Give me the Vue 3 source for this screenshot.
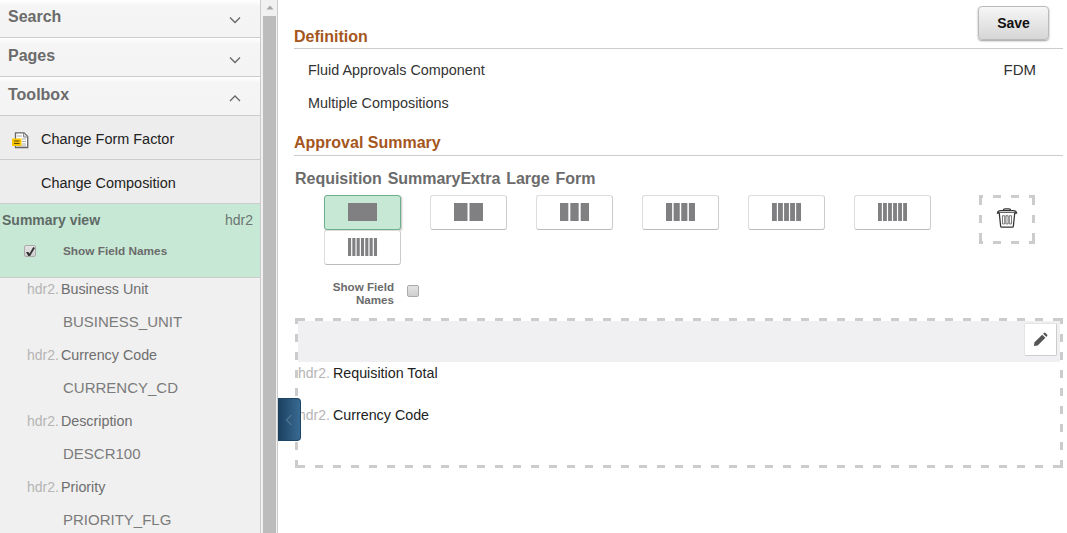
<script setup>
const heads = [
  { name: 'Search', up: false },
  { name: 'Pages', up: false },
  { name: 'Toolbox', up: true },
]
const fields = [
  ['Business Unit', 'BUSINESS_UNIT'],
  ['Currency Code', 'CURRENCY_CD'],
  ['Description', 'DESCR100'],
  ['Priority', 'PRIORITY_FLG'],
]
const layouts = [1, 2, 3, 4, 5, 6, 7]
function bars(n) {
  const gap = n > 4 ? 1.2 : n > 3 ? 1.500 : 2
  const w = (29 - gap * (n - 1)) / n
  return Array.from({ length: n }, (_, i) => ({ x: i * (w + gap), w }))
}
</script>

<template>
  <div class="page">
    <aside class="side">
      <div v-for="h in heads" :key="h.name" class="acc" :class="{ up: h.up }">
        <span>{{ h.name }}</span>
        <svg class="chev" width="14" height="8" viewBox="0 0 14 8">
          <path :d="h.up ? 'M2 7 L7 2 L12 7' : 'M2 1.500 L7 6.500 L12 1.500'" fill="none" stroke="#666" stroke-width="1.300" />
        </svg>
      </div>
      <div class="tool">
        <svg class="doc" width="17" height="17" viewBox="0 0 17 17">
          <path d="M3.500 .8 H12 L15.700 4.500 V15.500 H3.500 Z" fill="#fff" stroke="#666" stroke-width="1.300" />
          <path d="M11.500 1 V5 H15.500" fill="#ddd" stroke="#888" />
          <path d="M5 4 H10 M10 7 H14 M10 9.500 H14 M10 12 H14 M5 14 H14" stroke="#aaa" />
          <rect x="0" y="6.500" width="9.500" height="7.500" fill="#f7c600" />
          <path d="M2 9 H7.500 M2 11.500 H7.500" stroke="#5a4700" />
        </svg>
        <span>Change Form Factor</span>
      </div>
      <div class="tool"><span>Change Composition</span></div>
      <div class="summary">
        <div class="sum-top"><b>Summary view</b><span>hdr2</span></div>
        <label class="sum-check">
          <input class="cb" type="checkbox" checked />
          <span>Show Field Names</span>
        </label>
      </div>
      <div class="fields">
        <template v-for="f in fields" :key="f[1]">
          <div class="f-label"><i>hdr2.</i><span>{{ f[0] }}</span></div>
          <div class="f-code">{{ f[1] }}</div>
        </template>
      </div>
    </aside>

    <div class="scroll">
      <svg width="14" height="16" viewBox="0 0 14 16" class="arrow"><path d="M3.500 9.500 L7 5.500 L10.500 9.500 Z" fill="#a6a6a6" /></svg>
      <div class="thumb"></div>
    </div>

    <main class="main">
      <div class="sec first">
        <h2>Definition</h2>
        <button class="save">Save</button>
      </div>
      <div class="def-row"><span>Fluid Approvals Component</span><span class="fdm">FDM</span></div>
      <div class="def-row second"><span>Multiple Compositions</span></div>

      <div class="sec"><h2>Approval Summary</h2></div>
      <h3>Requisition SummaryExtra Large Form</h3>

      <div class="picker">
        <div class="grid">
          <button v-for="n in layouts" :key="n" class="lay" :class="{ on: n === 1 }">
            <svg width="29" height="18" viewBox="0 0 29 18">
              <rect v-for="(b, i) in bars(n)" :key="i" :x="b.x" y="0" :width="b.w" height="18" fill="#808083" />
            </svg>
          </button>
        </div>
        <div class="trash">
          <svg width="22" height="20" viewBox="0 0 24 22">
            <path d="M8 2.500 Q8 1 10 1 H14 Q16 1 16 2.500" fill="none" stroke="#333" stroke-width="1.400" />
            <path d="M1.500 5.500 Q2 3 5 3 H19 Q22 3 22.500 5.500 Z" fill="#fff" stroke="#333" stroke-width="1.400" />
            <path d="M3.500 5.500 L5 20 Q5 21 6.500 21 H17.500 Q19 21 19 20 L20.500 5.500" fill="#fff" stroke="#333" stroke-width="1.400" />
            <path d="M7 8.500 H9.500 V17.500 H7 Z M10.800 8.500 H13.200 V17.500 H10.800 Z M14.500 8.500 H17 V17.500 H14.500 Z" fill="none" stroke="#666" />
          </svg>
        </div>
      </div>

      <div class="show">
        <span>Show Field<br />Names</span>
        <input class="cb" type="checkbox" />
      </div>

      <div class="canvas">
        <div class="band">
          <button class="pencil">
            <svg width="15" height="15" viewBox="0 0 16 16">
              <path d="M1 15 L1.600 11 L9.800 2.800 L13.200 6.200 L5 14.400 Z M10.800 1.800 L12 .8 Q12.500 .4 13 .8 L15.200 3 Q15.600 3.500 15.200 4 L14.200 5.200 Z" fill="#555" />
            </svg>
          </button>
        </div>
        <div class="c-row"><i>hdr2.</i><span>Requisition Total</span></div>
        <div class="c-row"><i>hdr2.</i><span>Currency Code</span></div>
      </div>

      <div class="handle">
        <svg width="8" height="12" viewBox="0 0 8 12"><path d="M6.500 1 L1.500 6 L6.500 11" fill="none" stroke="#4d7491" stroke-width="1.200" /></svg>
      </div>
    </main>
  </div>
</template>

<style>
html, body { margin: 0; overflow: hidden; background: #fff; }
</style>

<style scoped>
.page {
  display: flex;
  width: 1067px;
  height: 533px;
  overflow: hidden;
  font-family: "Liberation Sans", Arial, sans-serif;
  background: #fff;
}
.side {
  width: 260px;
  flex: none;
  background: #f0f0f0;
  border-right: 1px solid #ccc;
  overflow: hidden;
}
.acc {
  height: 39px;
  box-sizing: border-box;
  border-bottom: 1px solid #ccc;
  background: linear-gradient(#fff 0, #f5f5f5 6px, #f4f4f4 100%);
  display: flex;
  justify-content: space-between;
  padding: 7px 18px 0 8px;
  font-size: 16px;
  font-weight: 700;
  line-height: 22px;
  color: #6b6b6b;
}
.acc:first-child { height: 38px; padding-top: 6px; }
.chev { margin-top: 11px; }
.acc:first-child .chev { margin-top: 10px; }
.acc.up .chev { margin-top: 10px; }
.tool {
  height: 44px;
  box-sizing: border-box;
  border-bottom: 1px solid #ccc;
  background: #ededed;
  display: flex;
  align-items: center;
  padding: 2px 0 0 41px;
  position: relative;
  font-size: 14.450px;
  color: #222;
}
.doc { position: absolute; left: 12px; top: 16px; }
.summary {
  height: 74px;
  box-sizing: border-box;
  background: #c8e8d6;
  border-bottom: 1px solid #ccc;
  padding: 6px 7px 0 2px;
}
.sum-top {
  display: flex;
  justify-content: space-between;
  font-size: 14px;
  line-height: 20px;
  color: #5f6b66;
}
.sum-top span { color: #6b7771; }
.sum-check {
  display: flex;
  align-items: center;
  margin-top: 11px;
  font-size: 11.800px;
  line-height: 20px;
  font-weight: 700;
  color: #6b6b6b;
}
.sum-check .cb { margin: 0 27px 0 22px; }
.cb {
  appearance: none;
  -webkit-appearance: none;
  position: relative;
  width: 12px;
  height: 12px;
  box-sizing: border-box;
  flex: none;
  border: 1px solid #aaa;
  border-radius: 2px;
  background: linear-gradient(#e4e4e4, #cfcfcf);
}
.cb:checked::after {
  content: "";
  position: absolute;
  left: 1px;
  top: 1px;
  width: 9px;
  height: 9px;
  background: #333;
  clip-path: polygon(0 55%, 25% 55%, 40% 72%, 80% 0, 100% 10%, 45% 100%, 25% 100%);
}
.fields { padding-top: 1px; }
.f-label, .f-code {
  height: 33px;
  line-height: 21px;
  font-size: 14.300px;
  color: #6e6e6e;
}
.f-label { padding-left: 27px; display: flex; }
.f-label i { font-style: normal; color: #b5b5b5; margin-right: 2px; font-size: 14px; }
.f-code { padding-left: 63px; line-height: 20px; font-size: 15px; color: #7b7b7b; }
.scroll {
  width: 15px;
  flex: none;
  background: #f1f1f1;
  border-right: 1px solid #ccc;
  display: flex;
  flex-direction: column;
  align-items: center;
  padding-left: 1px;
}
.arrow { flex: none; }
.thumb { width: 13px; flex: 1; background: #bcbcbc; }
.main {
  flex: 1;
  position: relative;
  padding: 0 4px 0 16px;
  min-width: 0;
}
.sec {
  display: flex;
  justify-content: space-between;
  align-items: flex-end;
  border-bottom: 1px solid #ccc;
  padding-bottom: 3px;
  margin-top: 20px;
  height: 20px;
}
.sec.first {
  margin-top: 0;
  padding: 0;
  height: 48px;
  align-items: flex-start;
}
.sec.first h2 { margin-top: 28px; }
h2 {
  margin: 0;
  font-size: 16px;
  line-height: 18px;
  font-weight: 700;
  color: #a5561d;
}
.save {
  margin: 6px 14px 0 0;
  width: 71px;
  height: 34px;
  border: 1px solid #bbb;
  border-radius: 4px;
  background: linear-gradient(#f6f6f6, #d6d6d6);
  box-shadow: 0 1px 2px rgba(0,0,0,.4);
  font: 700 14px "Liberation Sans", Arial, sans-serif;
  color: #111;
  padding: 0;
}
.def-row {
  display: flex;
  justify-content: space-between;
  height: 33px;
  padding: 12px 27px 0 14px;
  box-sizing: border-box;
  font-size: 14.400px;
  line-height: 18px;
  color: #333;
}
.def-row.second { padding-top: 12px; height: 30px; }
.fdm { font-size: 15px; }
h3 {
  margin: 13px 0 0 1px;
  font-size: 16px;
  line-height: 20px;
  font-weight: 700;
  color: #6b6b6b;
  letter-spacing: -.03px;
  word-spacing: 1.500px;
}
.picker { display: flex; margin-top: 6px; margin-left: 30px; height: 70px; }
.grid {
  width: 640px;
  display: grid;
  grid-template-columns: repeat(6, 77px);
  column-gap: 29px;
  grid-auto-rows: 35px;
}
.lay {
  width: 77px;
  height: 35px;
  box-sizing: border-box;
  background: #fff;
  border: 1px solid #ddd;
  border-bottom-color: #bbb;
  border-right-color: #ccc;
  border-radius: 3px;
  padding: 0;
  display: flex;
  align-items: center;
  justify-content: center;
}
.lay svg { margin-top: -2px; }
.lay.on { background: #c8e8d6; border-color: #6fb08c; box-shadow: 1px 1px 2px rgba(0,0,0,.25); }
.trash {
  width: 56px;
  height: 49px;
  box-sizing: border-box;
  margin-left: 15px;
  padding-bottom: 4px;
  background:
    repeating-linear-gradient(90deg, #ccc 0 4px, transparent 4px 14px, #ccc 14px 18px) 0 0 / 100% 3px no-repeat,
    repeating-linear-gradient(90deg, #ccc 0 4px, transparent 4px 14px, #ccc 14px 18px) 0 100% / 100% 3px no-repeat,
    repeating-linear-gradient(180deg, transparent 0 2px, #ccc 2px 10px, transparent 10px 18px) 0 0 / 3px 100% no-repeat,
    repeating-linear-gradient(180deg, transparent 0 2px, #ccc 2px 10px, transparent 10px 18px) 100% 0 / 3px 100% no-repeat;
  display: flex;
  align-items: center;
  justify-content: center;
}
.show {
  display: flex;
  align-items: center;
  height: 30px;
  margin-top: 13px;
  font-size: 11.600px;
  line-height: 13px;
  font-weight: 700;
  color: #6b6b6b;
}
.show span { width: 100px; text-align: right; }
.show .cb { margin: -4px 0 0 13px; }
.canvas {
  margin-top: 10px;
  margin-left: 1px;
  height: 150px;
  box-sizing: border-box;
  padding: 3px;
  background:
    repeating-linear-gradient(90deg, transparent 0 2px, #ccc 2px 10px, transparent 10px 18px) 0 0 / 100% 3px no-repeat,
    repeating-linear-gradient(90deg, transparent 0 2px, #ccc 2px 10px, transparent 10px 18px) 0 100% / 100% 3px no-repeat,
    repeating-linear-gradient(180deg, #ccc 0 6px, transparent 6px 16px, #ccc 16px 18px) 0 0 / 3px 100% no-repeat,
    repeating-linear-gradient(180deg, #ccc 0 6px, transparent 6px 16px, #ccc 16px 18px) 100% 0 / 3px 100% no-repeat;
  font-size: 14.300px;
  color: #222;
}
.band {
  height: 41px;
  background: #f0f0f2;
  display: flex;
  justify-content: flex-end;
  padding: 2px 3px 0 0;
  box-sizing: border-box;
}
.pencil {
  width: 33px;
  height: 33px;
  box-sizing: border-box;
  background: #fff;
  border: 1px solid #e4e4e4;
  border-right-color: #ccc;
  border-bottom-color: #ccc;
  border-radius: 2px;
  padding: 0;
  display: flex;
  align-items: center;
  justify-content: center;
}
.c-row { height: 42px; padding-top: 3px; line-height: 16px; box-sizing: border-box; display: flex; }
.c-row i { font-style: normal; color: #b5b5b5; margin-right: 3px; font-size: 14px; }
.handle {
  position: absolute;
  left: 0;
  top: 398px;
  width: 23px;
  height: 43px;
  box-sizing: border-box;
  border-radius: 0 4px 4px 0;
  background: linear-gradient(90deg, #1b3f5f, #396a92);
  border: 1px solid #1d4566;
  border-left: 0;
  display: flex;
  align-items: center;
  justify-content: center;
}
</style>
